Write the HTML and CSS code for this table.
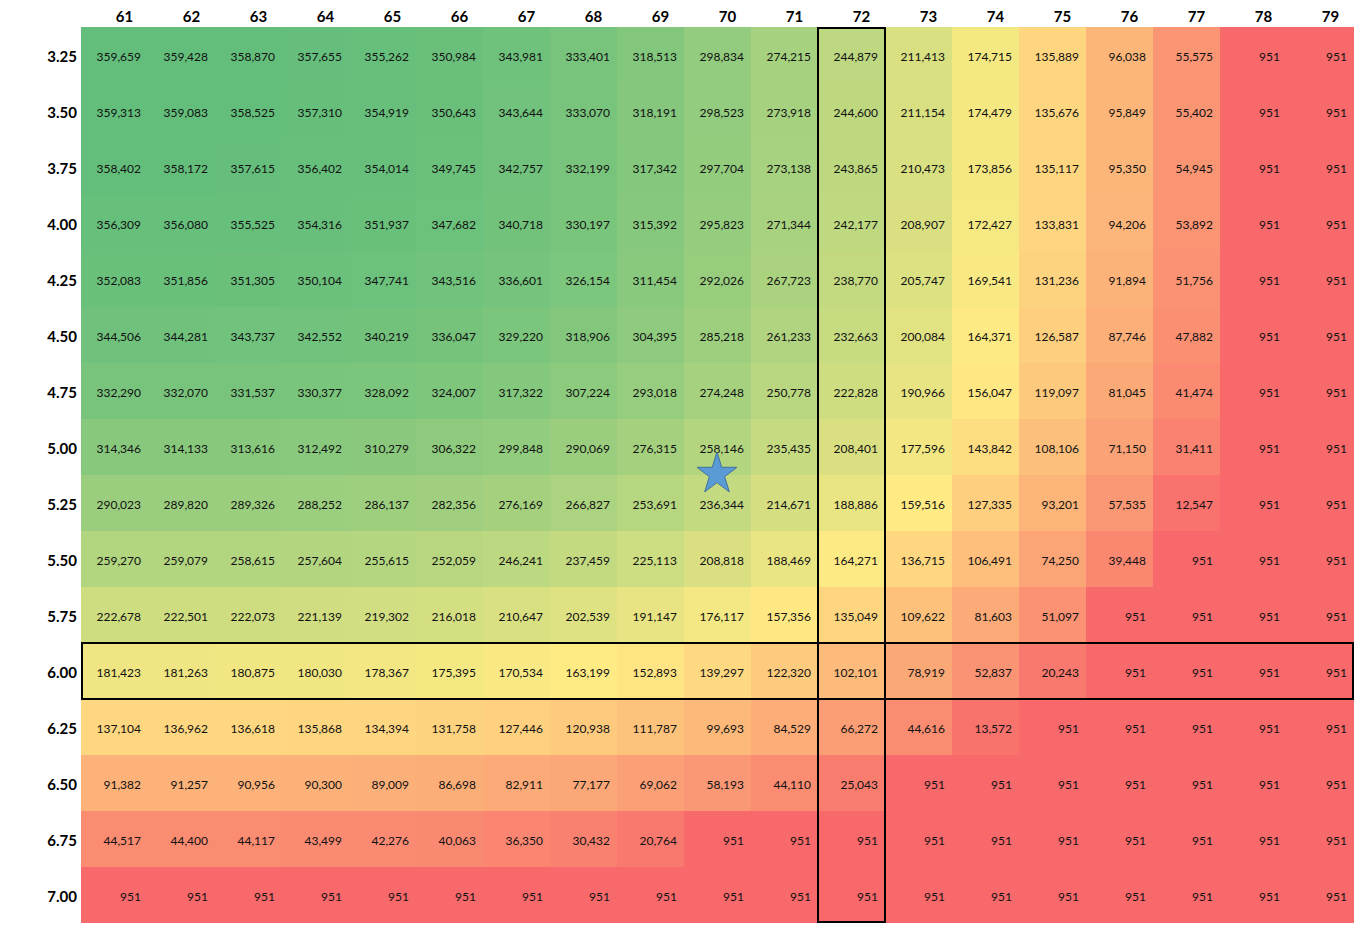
FILE: index.html
```html
<!DOCTYPE html>
<html lang="en">
<head>
<meta charset="utf-8">
<title>Sensitivity table</title>
<link rel="stylesheet" href="styles.css">
</head>
<body>
<div class="sheet" id="sheet">
  <div class="box box-col"></div>
  <div class="box box-row"></div>
  <svg class="star" viewBox="0.98 1 38.04 36.18" preserveAspectRatio="none" aria-hidden="true">
    <polygon points="20,1 24.49,14.82 39.02,14.82 27.27,23.36 31.76,37.18 20,28.64 8.24,37.18 12.73,23.36 0.98,14.82 15.51,14.82" fill="#5B9BD5" stroke="#41719C" stroke-width="1" vector-effect="non-scaling-stroke"/>
  </svg>
</div>
<script src="script.js"></script>
</body>
</html>
```

FILE: styles.css
```css
html, body {
  margin: 0;
  padding: 0;
  background: #ffffff;
}

.sheet {
  position: relative;
  display: grid;
  grid-template-columns: 81px repeat(19, 67px);
  grid-template-rows: 27px repeat(16, 56px);
  font-family: "Lato", "Open Sans", sans-serif;
  color: #000000;
}

.col-head {
  box-sizing: border-box;
  padding-top: 9px;
  padding-left: 20px;
  line-height: 15px;
  font-size: 15px;
  font-weight: 700;
  text-align: center;
}

.corner {
  display: block;
}

.row-head {
  box-sizing: border-box;
  padding-top: 2px;
  padding-right: 4px;
  line-height: 54px;
  font-size: 15px;
  font-weight: 700;
  text-align: right;
}

.cell {
  box-sizing: border-box;
  padding-top: 4px;
  padding-right: 7px;
  line-height: 52px;
  font-size: 12px;
  text-align: right;
  white-space: nowrap;
  color: #111111;
}

.box {
  position: absolute;
  border: 2px solid #000000;
  z-index: 2;
  pointer-events: none;
}

.box-col {
  grid-column: 13 / 14;
  grid-row: 2 / 18;
  top: 0;
  bottom: 0;
  left: -1px;
  right: -1px;
}

.box-row {
  grid-column: 2 / 21;
  grid-row: 13 / 14;
  top: -1px;
  bottom: -1px;
  left: 0;
  right: 0;
}

.star {
  position: absolute;
  grid-column: 11 / 12;
  grid-row: 9 / 10;
  left: 13px;
  top: 33px;
  width: 40px;
  height: 40px;
  z-index: 3;
}
```

FILE: script.js
```js
(function () {
  var cols = [61,62,63,64,65,66,67,68,69,70,71,72,73,74,75,76,77,78,79];
  var rows = ["3.25","3.50","3.75","4.00","4.25","4.50","4.75","5.00","5.25","5.50","5.75","6.00","6.25","6.50","6.75","7.00"];
  var data = [
    [359659,359428,358870,357655,355262,350984,343981,333401,318513,298834,274215,244879,211413,174715,135889,96038,55575,951,951],
    [359313,359083,358525,357310,354919,350643,343644,333070,318191,298523,273918,244600,211154,174479,135676,95849,55402,951,951],
    [358402,358172,357615,356402,354014,349745,342757,332199,317342,297704,273138,243865,210473,173856,135117,95350,54945,951,951],
    [356309,356080,355525,354316,351937,347682,340718,330197,315392,295823,271344,242177,208907,172427,133831,94206,53892,951,951],
    [352083,351856,351305,350104,347741,343516,336601,326154,311454,292026,267723,238770,205747,169541,131236,91894,51756,951,951],
    [344506,344281,343737,342552,340219,336047,329220,318906,304395,285218,261233,232663,200084,164371,126587,87746,47882,951,951],
    [332290,332070,331537,330377,328092,324007,317322,307224,293018,274248,250778,222828,190966,156047,119097,81045,41474,951,951],
    [314346,314133,313616,312492,310279,306322,299848,290069,276315,258146,235435,208401,177596,143842,108106,71150,31411,951,951],
    [290023,289820,289326,288252,286137,282356,276169,266827,253691,236344,214671,188886,159516,127335,93201,57535,12547,951,951],
    [259270,259079,258615,257604,255615,252059,246241,237459,225113,208818,188469,164271,136715,106491,74250,39448,951,951,951],
    [222678,222501,222073,221139,219302,216018,210647,202539,191147,176117,157356,135049,109622,81603,51097,951,951,951,951],
    [181423,181263,180875,180030,178367,175395,170534,163199,152893,139297,122320,102101,78919,52837,20243,951,951,951,951],
    [137104,136962,136618,135868,134394,131758,127446,120938,111787,99693,84529,66272,44616,13572,951,951,951,951,951],
    [91382,91257,90956,90300,89009,86698,82911,77177,69062,58193,44110,25043,951,951,951,951,951,951,951],
    [44517,44400,44117,43499,42276,40063,36350,30432,20764,951,951,951,951,951,951,951,951,951,951],
    [951,951,951,951,951,951,951,951,951,951,951,951,951,951,951,951,951,951,951]
  ];

  var all = [];
  data.forEach(function (r) { r.forEach(function (v) { all.push(v); }); });
  all.sort(function (a, b) { return a - b; });
  var min = all[0], max = all[all.length - 1];
  var rank = 0.5 * (all.length - 1);
  var lo = Math.floor(rank), frac = rank - lo;
  var mid = all[lo] + (all[lo + 1] - all[lo]) * frac;

  var red = [248, 105, 107], yellow = [255, 235, 132], green = [99, 190, 123];
  function mix(a, b, t) {
    return [0, 1, 2].map(function (i) { return Math.round(a[i] + (b[i] - a[i]) * t); });
  }
  function colour(v) {
    var c;
    if (v <= mid) {
      c = mix(red, yellow, mid === min ? 1 : (v - min) / (mid - min));
    } else {
      c = mix(yellow, green, (v - mid) / (max - mid));
    }
    return "rgb(" + c.join(",") + ")";
  }
  function fmt(v) {
    return String(v).replace(/\B(?=(\d{3})+(?!\d))/g, ",");
  }

  var sheet = document.getElementById("sheet");
  var first = sheet.firstChild;
  var frag = document.createDocumentFragment();

  var corner = document.createElement("div");
  corner.className = "corner";
  frag.appendChild(corner);
  cols.forEach(function (c) {
    var h = document.createElement("div");
    h.className = "col-head";
    h.textContent = c;
    frag.appendChild(h);
  });
  rows.forEach(function (label, ri) {
    var rh = document.createElement("div");
    rh.className = "row-head";
    rh.textContent = label;
    frag.appendChild(rh);
    data[ri].forEach(function (v) {
      var d = document.createElement("div");
      d.className = "cell";
      d.style.backgroundColor = colour(v);
      d.textContent = fmt(v);
      frag.appendChild(d);
    });
  });
  sheet.insertBefore(frag, first);
})();
```
